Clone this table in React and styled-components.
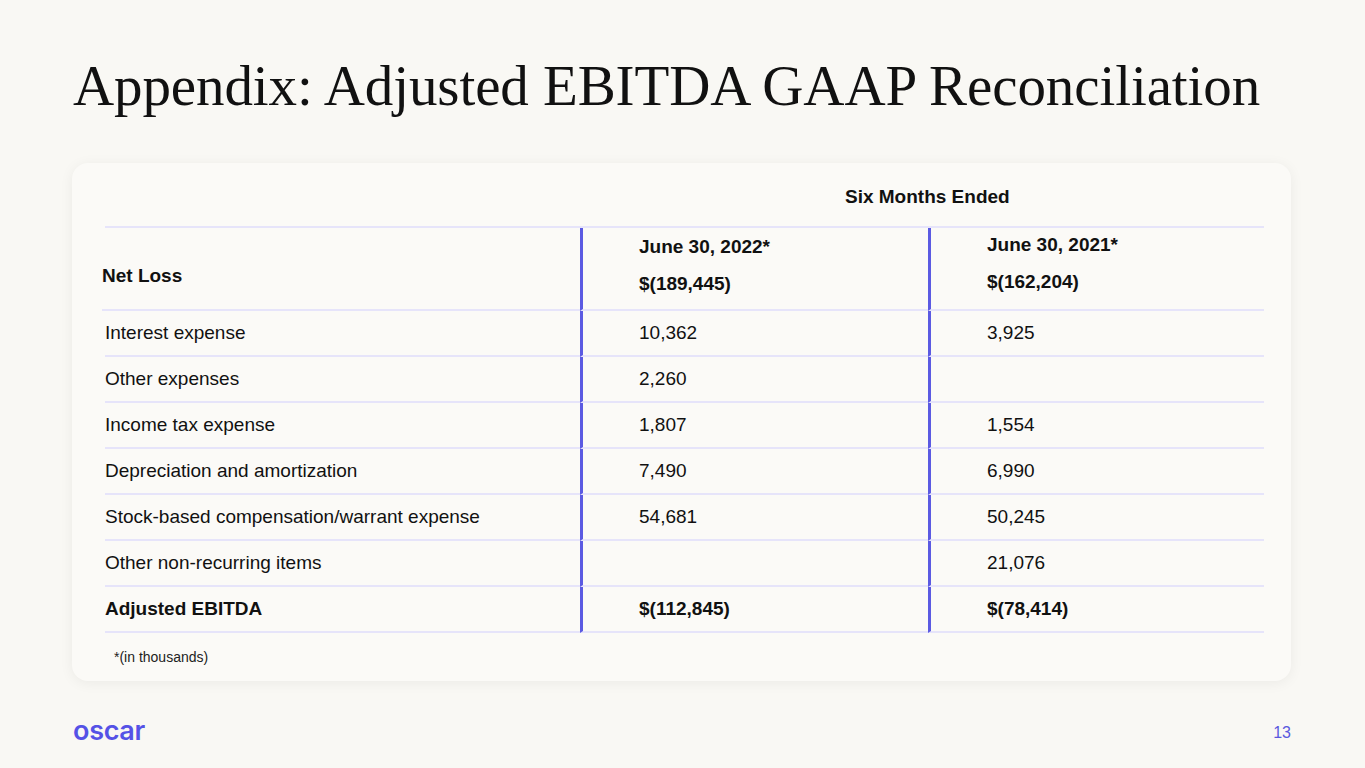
import React from 'react';
import styled, { createGlobalStyle } from 'styled-components';

const GlobalStyle = createGlobalStyle`
  html, body {
    margin: 0;
    padding: 0;
    background: #f9f8f4;
  }
  body {
    font-family: "Liberation Sans", Arial, sans-serif;
    color: #111;
  }
`;

const Slide = styled('div')`
  width: 1365px;
  height: 768px;
  box-sizing: border-box;
  padding: 48px 74px 0 72px;
  display: flex;
  flex-direction: column;
  background: #f9f8f4;
  overflow: hidden;
`;

const Title = styled('h1')`
  margin: 0 0 0 1px;
  font-family: "Liberation Serif", "Times New Roman", serif;
  font-weight: 400;
  font-size: 57px;
  line-height: 76px;
  letter-spacing: -0.1px;
  white-space: nowrap;
  color: #111;
`;

const Card = styled('section')`
  margin-top: 39px;
  width: 1219px;
  height: 518px;
  flex-shrink: 0;
  box-sizing: border-box;
  background: #fbfaf7;
  border-radius: 16px;
  box-shadow: 0 2px 14px rgba(0, 0, 0, 0.06);
  padding: 22px 27px 0 33px;
`;

const Table = styled('div')`
  display: grid;
  grid-template-columns: 475px 348px 336px;
`;

const PeriodHead = styled('div')`
  grid-column: 1 / 4;
  box-sizing: border-box;
  padding: 0 0 17px 740px;
  font-weight: 700;
  font-size: 19px;
  line-height: 24px;
  border-bottom: 2px solid #e6e4fa;
`;

const Cell = styled('div')`
  box-sizing: border-box;
  display: flex;
  flex-direction: column;
  justify-content: ${(p) => (p.$head ? 'flex-start' : 'center')};
  height: ${(p) => (p.$head ? '83px' : '46px')};
  padding-top: ${(p) => (p.$top ? `${p.$top}px` : '0')};
  padding-left: ${(p) => (p.$num ? '56px' : '0')};
  margin-left: ${(p) => (p.$pull ? '-3px' : '0')};
  border-bottom: 2px solid #e6e4fa;
  border-left: ${(p) => (p.$num ? '3px solid #5b5ae2' : 'none')};
  font-size: 19px;
  line-height: 26px;
  font-weight: ${(p) => (p.$bold ? 700 : 400)};
  color: #111;
`;

const HeadLine = styled('span')`
  display: block;
  font-weight: 700;
  line-height: 26px;
  & + & {
    margin-top: 11px;
  }
`;

const Note = styled('p')`
  margin: 16px 0 0 9px;
  font-size: 14px;
  color: #222;
`;

const Footer = styled('footer')`
  display: flex;
  justify-content: space-between;
  align-items: center;
  margin-top: 35px;
`;

const Logo = styled('span')`
  font-family: Inter, "DejaVu Sans", sans-serif;
  font-weight: 600;
  font-size: 27px;
  letter-spacing: -0.3px;
  color: #5552e6;
  line-height: 30px;
  margin-left: 1px;
`;

const PageNum = styled('span')`
  font-size: 16px;
  color: #5a58de;
  margin-top: 4px;
`;

const rows = [
  ['Interest expense', '10,362', '3,925'],
  ['Other expenses', '2,260', ''],
  ['Income tax expense', '1,807', '1,554'],
  ['Depreciation and amortization', '7,490', '6,990'],
  ['Stock-based compensation/warrant expense', '54,681', '50,245'],
  ['Other non-recurring items', '', '21,076'],
];

export default function App() {
  return (
    <>
      <GlobalStyle />
      <Slide>
        <Title>Appendix: Adjusted EBITDA GAAP Reconciliation</Title>
        <Card>
          <Table>
            <PeriodHead>Six Months Ended</PeriodHead>
            <Cell $head $bold $pull $top={35}>Net Loss</Cell>
            <Cell $head $num $top={6}>
              <HeadLine>June 30, 2022*</HeadLine>
              <HeadLine>$(189,445)</HeadLine>
            </Cell>
            <Cell $head $num $top={4}>
              <HeadLine>June 30, 2021*</HeadLine>
              <HeadLine>$(162,204)</HeadLine>
            </Cell>
            {rows.map(([label, a, b]) => (
              <React.Fragment key={label}>
                <Cell>{label}</Cell>
                <Cell $num>{a}</Cell>
                <Cell $num>{b}</Cell>
              </React.Fragment>
            ))}
            <Cell $bold>Adjusted EBITDA</Cell>
            <Cell $num $bold>$(112,845)</Cell>
            <Cell $num $bold>$(78,414)</Cell>
          </Table>
          <Note>*(in thousands)</Note>
        </Card>
        <Footer>
          <Logo>oscar</Logo>
          <PageNum>13</PageNum>
        </Footer>
      </Slide>
    </>
  );
}
